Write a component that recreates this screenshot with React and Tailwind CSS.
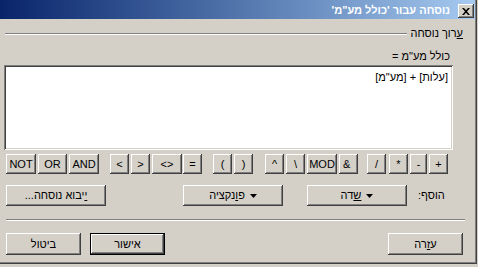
import React from 'react';

/* ── Win2k bevels ─────────────────────────────────────────────────────────── */
const raised =
  'bg-[#d4d0c8] shadow-[inset_-1px_-1px_#404040,inset_1px_1px_#ffffff,inset_-2px_-2px_#808080,inset_2px_2px_#d4d0c8]';
const sunken =
  'bg-white shadow-[inset_1px_1px_#808080,inset_-1px_-1px_#ffffff,inset_2px_2px_#404040,inset_-2px_-2px_#d4d0c8]';

function Btn({ className = '', children }) {
  return (
    <div className={`${raised} h-full flex items-center justify-center shrink-0 ${className}`}>
      {children}
    </div>
  );
}

function Arrow() {
  return (
    <svg width="7" height="4" viewBox="0 0 7 4" className="shrink-0">
      <path d="M0 0h7L3.5 4z" fill="#000" />
    </svg>
  );
}

export default function App() {
  return (
    <div className="w-[478px] h-[267px] bg-[#d4d0c8] overflow-hidden font-['Liberation_Sans',Arial,sans-serif] text-[11px] leading-none text-black">
      <div className="w-[477px] h-[264px] border-r border-b border-[#404040]">
        <div className="h-full border-r border-b border-[#808080] flex flex-col">
          {/* ── Title bar ─────────────────────────────────────────────── */}
          <div className="h-[19px] shrink-0 bg-gradient-to-r from-[#0a246a] to-[#a6caf0] flex items-start justify-end pr-[1px]">
            <div dir="rtl" className="mt-[4px] font-bold text-white leading-[12px]">
              נוסחה עבור 'כולל מע"מ'
            </div>
            <div className={`${raised} ml-[8px] mt-[4px] w-[16px] h-[14px] flex items-center justify-center`}>
              <svg width="8" height="7" viewBox="0 0 8 7">
                <path d="M0 0h2l2 2.2L6 0h2L5 3.5 8 7H6L4 4.8 2 7H0l3-3.5z" fill="#000" />
              </svg>
            </div>
          </div>

          {/* ── Group header ──────────────────────────────────────────── */}
          <div className="mt-[8px] h-[13px] flex items-center pr-[12px]">
            <div className="flex-1 ml-[5px] h-[2px] border-t border-[#808080] border-b border-b-white" />
            <div dir="rtl" className="ml-[3px]">
              <u>ע</u>רוך נוסחה
            </div>
          </div>

          <div className="mt-[10px] h-[13px] flex items-center justify-end pr-[25px]">
            <div dir="rtl">כולל מע"מ =</div>
          </div>

          {/* ── Formula box ───────────────────────────────────────────── */}
          <div className={`${sunken} mt-[2px] ml-[4px] w-[449px] h-[85px] shrink-0 pt-[7px] pr-[5px]`}>
            <div dir="rtl" className="text-right">[עלות] + [מע"מ]</div>
          </div>

          {/* ── Operators ─────────────────────────────────────────────── */}
          <div className="mt-[4px] h-[20px] flex shrink-0">
            <Btn className="ml-[6px] w-[30px]">NOT</Btn>
            <Btn className="ml-[2px] w-[29px]">OR</Btn>
            <Btn className="ml-[2px] w-[30px]">AND</Btn>
            <Btn className="ml-[11px] w-[19px]">&lt;</Btn>
            <Btn className="ml-[2px] w-[19px]">&gt;</Btn>
            <Btn className="ml-[2px] w-[30px]">&lt;&gt;</Btn>
            <Btn className="ml-[1px] w-[19px]">=</Btn>
            <Btn className="ml-[11px] w-[19px]">(</Btn>
            <Btn className="ml-[2px] w-[19px]">)</Btn>
            <Btn className="ml-[12px] w-[19px]">^</Btn>
            <Btn className="ml-[2px] w-[19px]">\</Btn>
            <Btn className="ml-[2px] w-[30px]">MOD</Btn>
            <Btn className="ml-[2px] w-[19px] !justify-start pl-[4px]">&amp;</Btn>
            <Btn className="ml-[9px] w-[19px]">/</Btn>
            <Btn className="ml-[3px] w-[19px]">*</Btn>
            <Btn className="ml-[2px] w-[17px]">-</Btn>
            <Btn className="ml-[2px] w-[19px]">+</Btn>
          </div>

          {/* ── Insert row ────────────────────────────────────────────── */}
          <div className="mt-[11px] h-[21px] flex items-center shrink-0">
            <Btn className="ml-[6px] w-[100px]">
              <span dir="rtl"><u>י</u>יבוא נוסחה...</span>
            </Btn>
            <Btn className="ml-[77px] w-[100px] gap-[5px]">
              <span dir="rtl">פ<u>ו</u>נקציה</span>
              <Arrow />
            </Btn>
            <Btn className="ml-[24px] w-[100px] gap-[5px]">
              <span dir="rtl"><u>ש</u>דה</span>
              <Arrow />
            </Btn>
            <div dir="rtl" className="ml-[11px]">הוסף:</div>
          </div>

          <div className="mt-[13px] ml-[6px] mr-[10px] h-[2px] shrink-0 border-t border-[#808080] border-b border-b-white" />

          {/* ── Dialog buttons ────────────────────────────────────────── */}
          <div className="mt-[12px] h-[22px] flex shrink-0">
            <Btn className="ml-[6px] w-[75px]">
              <span dir="rtl">ביטול</span>
            </Btn>
            <div className="ml-[9px] w-[75px] h-full border border-black shrink-0">
              <Btn className="w-full">
                <span dir="rtl">אישור</span>
              </Btn>
            </div>
            <Btn className="ml-auto mr-[12px] w-[75px]">
              <span dir="rtl">ע<u>ז</u>רה</span>
            </Btn>
          </div>
        </div>
      </div>
    </div>
  );
}
